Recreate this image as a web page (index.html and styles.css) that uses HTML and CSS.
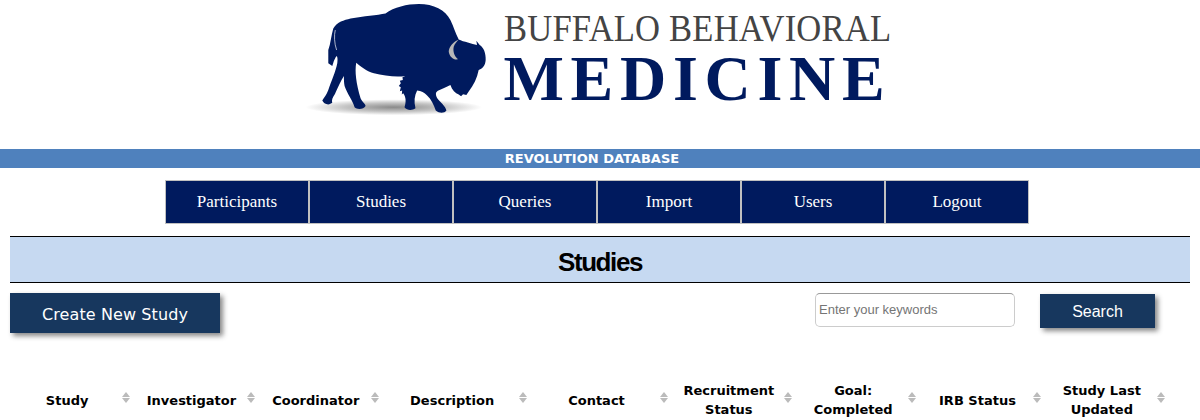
FILE: index.html
```html
<!DOCTYPE html>
<html lang="en">
<head>
    <meta charset="UTF-8">
    <meta name="viewport" content="width=device-width, initial-scale=1.0">
    <title>Studies</title>
    <link rel="stylesheet" href="styles.css">
</head>
<body>
    <div class="logo">
        <svg class="logo-bison" viewBox="40 0 550 375" aria-hidden="true">
            <defs>
                <radialGradient id="groundShadow">
                    <stop offset="0" stop-color="#8a8a8a"/>
                    <stop offset="0.55" stop-color="#c4c4c4"/>
                    <stop offset="1" stop-color="#ffffff"/>
                </radialGradient>
            </defs>
            <ellipse cx="310" cy="322" rx="265" ry="24" fill="url(#groundShadow)"/>
            <path fill="#001a5e" d="M128,85 C140,65 160,60 180,55 C220,48 260,45 285,40 C310,22 350,12 385,12 C430,12 465,30 480,60 C490,80 495,100 505,118 C520,125 545,130 560,135 L558,122 L568,135 C580,142 587,160 586,180 C585,195 578,205 565,210 C560,235 550,255 535,275 L528,285 L518,283 L512,289 L505,284 C495,280 485,270 480,255 C465,262 452,268 444,272 C436,276 434,282 440,294 C448,306 466,318 468,332 C462,340 448,342 436,332 C430,315 422,298 410,287 C402,279 392,272 380,272 C372,288 370,305 375,325 C365,332 350,332 342,322 C348,305 346,290 338,280 L334,284 L335,272 L328,274 L331,262 L325,258 L331,250 L328,242 L337,240 L336,232 L345,228 C320,232 280,228 250,220 C230,214 210,200 197,188 C192,215 197,250 210,295 C216,308 225,312 225,318 C220,328 200,330 192,322 C188,305 168,278 162,258 C160,248 160,238 160,228 C152,240 142,262 133,282 C126,292 122,302 125,308 C118,316 102,316 95,302 C100,292 108,285 113,270 C122,245 135,215 140,190 C142,175 140,165 136,170 L130,182 L125,198 L113,190 L113,150 C120,130 122,105 128,85 Z"/>
            <path fill="none" stroke="#ffffff" stroke-width="2" d="M134,90 C130,105 131,130 138,150"/>
            <path fill="#b7b7b7" d="M505,118 C490,124 475,140 475,155 C477,170 490,181 503,178 C492,168 487,155 490,140 C493,130 500,124 505,118 Z"/>
        </svg>
        <div class="logo-text">
            <div class="logo-top">BUFFALO BEHAVIORAL</div>
            <div class="logo-bottom">MEDICINE</div>
        </div>
    </div>

    <div class="band">REVOLUTION DATABASE</div>

    <div class="nav">
        <a class="nav-item" href="#">Participants</a>
        <a class="nav-item" href="#">Studies</a>
        <a class="nav-item" href="#">Queries</a>
        <a class="nav-item" href="#">Import</a>
        <a class="nav-item" href="#">Users</a>
        <a class="nav-item" href="#">Logout</a>
    </div>

    <h1 class="page-title">Studies</h1>

    <div class="toolbar">
        <button class="btn btn-create">Create New Study</button>
        <div class="search">
            <input class="search-input" type="text" placeholder="Enter your keywords">
            <button class="btn btn-search">Search</button>
        </div>
    </div>

    <table class="studies">
        <colgroup>
            <col class="col-a"><col class="col-a"><col class="col-a"><col class="col-b"><col class="col-c"><col class="col-a"><col class="col-a"><col class="col-a"><col class="col-a">
        </colgroup>
        <thead>
            <tr>
                <th>Study<span class="sort"></span></th>
                <th>Investigator<span class="sort"></span></th>
                <th>Coordinator<span class="sort"></span></th>
                <th>Description<span class="sort"></span></th>
                <th>Contact<span class="sort"></span></th>
                <th>Recruitment Status<span class="sort"></span></th>
                <th>Goal: Completed<span class="sort"></span></th>
                <th>IRB Status<span class="sort"></span></th>
                <th>Study Last Updated<span class="sort"></span></th>
            </tr>
        </thead>
    </table>
</body>
</html>
```

FILE: styles.css
```css
body {
    margin: 0;
    background-color: white;
    color: black;
    font-family: "DejaVu Sans", Verdana, sans-serif;
}

.logo {
    display: flex;
    justify-content: center;
    height: 149px;
    padding-right: 3px;
    box-sizing: border-box;
}

.logo-bison {
    width: 183px;
    height: 125px;
    margin-right: 17px;
    flex: none;
}

.logo-text {
    width: 390px;
    font-family: "Liberation Serif", serif;
    white-space: nowrap;
}

.logo-top {
    margin-top: 9px;
    font-size: 38px;
    line-height: 38px;
    letter-spacing: 0.2px;
    color: #444;
    transform: scaleX(0.91);
    transform-origin: left;
}

.logo-bottom {
    margin-top: 7px;
    font-size: 64px;
    line-height: 50px;
    font-weight: bold;
    letter-spacing: 6.7px;
    color: #001a5e;
}

.band {
    height: 19px;
    padding-right: 16px;
    line-height: 19px;
    background-color: #4f81bd;
    color: white;
    font-size: 13px;
    font-weight: bold;
    text-align: center;
}

.nav {
    display: flex;
    justify-content: center;
    margin-top: 12px;
    padding-right: 6px;
}

.nav-item {
    width: 144px;
    height: 44px;
    box-sizing: border-box;
    border: 1px solid #c0c0c0;
    background-color: #001a5e;
    color: white;
    font-family: "Liberation Serif", serif;
    font-size: 17px;
    line-height: 42px;
    text-align: center;
    text-decoration: none;
}

.page-title {
    margin: 12px 10px 0;
    height: 45px;
    border-top: 1px solid black;
    border-bottom: 1px solid black;
    background-color: #c6d9f1;
    font-family: "Liberation Sans", Arial, sans-serif;
    font-size: 26px;
    line-height: 50px;
    letter-spacing: -1.4px;
    text-align: center;
}

.toolbar {
    display: flex;
    justify-content: space-between;
    align-items: flex-start;
    margin: 10px 45px 0 10px;
}

.btn {
    border: none;
    background-color: #17375e;
    color: white;
    box-shadow: 3px 3px 5px #888;
    cursor: pointer;
}

.btn-create {
    width: 210px;
    height: 40px;
    padding-top: 4px;
    font-family: "DejaVu Sans", Verdana, sans-serif;
    font-size: 16px;
    letter-spacing: 0.1px;
}

.search {
    display: flex;
    align-items: flex-start;
    gap: 25px;
}

.search-input {
    width: 200px;
    height: 34px;
    box-sizing: border-box;
    padding: 0 3px 2px;
    border: 1px solid #ccc;
    border-top-color: #999;
    border-radius: 5px;
    font-family: "Liberation Sans", Arial, sans-serif;
    font-size: 13px;
}

.btn-search {
    width: 115px;
    height: 34px;
    margin-top: 1px;
    padding-top: 2px;
    font-family: "Liberation Sans", Arial, sans-serif;
    font-size: 16px;
}

.studies {
    table-layout: fixed;
    width: 1159px;
    margin: 48px 0 0 10px;
    border-collapse: collapse;
}

.col-a {
    width: 124px;
}

.col-b {
    width: 148px;
}

.col-c {
    width: 140px;
}

.studies th {
    position: relative;
    padding: 0 18px 0 8px;
    font-size: 13px;
    line-height: 19px;
    text-align: center;
}

.sort {
    position: absolute;
    top: 50%;
    right: 4px;
    width: 8px;
    height: 11px;
    margin-top: -8px;
}

.sort::before,
.sort::after {
    content: "";
    position: absolute;
    left: 0;
    border-left: 4px solid transparent;
    border-right: 4px solid transparent;
}

.sort::before {
    top: 0;
    border-bottom: 5px solid #bbb;
}

.sort::after {
    bottom: 0;
    border-top: 5px solid #bbb;
}
```
